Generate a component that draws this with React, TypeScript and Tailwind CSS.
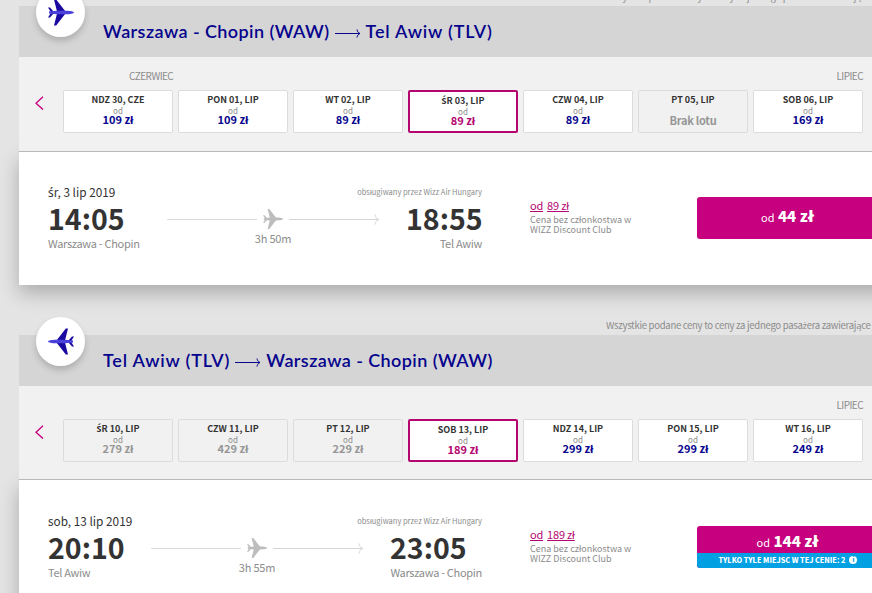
import clsx from "clsx";

type Day = {
  date: string;
  price: string;
  state?: "selected" | "past" | "none";
};

type Flight = {
  from: string;
  to: string;
  back?: boolean;
  month?: string;
  days: Day[];
  date: string;
  start: string;
  startCity: string;
  end: string;
  endCity: string;
  duration: string;
  regular: string;
  price: string;
  seats?: number;
};

const flights: Flight[] = [
  {
    from: "Warszawa - Chopin (WAW)",
    to: "Tel Awiw (TLV)",
    month: "CZERWIEC",
    days: [
      { date: "NDZ 30, CZE", price: "109 zł" },
      { date: "PON 01, LIP", price: "109 zł" },
      { date: "WT 02, LIP", price: "89 zł" },
      { date: "ŚR 03, LIP", price: "89 zł", state: "selected" },
      { date: "CZW 04, LIP", price: "89 zł" },
      { date: "PT 05, LIP", price: "Brak lotu", state: "none" },
      { date: "SOB 06, LIP", price: "169 zł" },
    ],
    date: "śr, 3 lip 2019",
    start: "14:05",
    startCity: "Warszawa - Chopin",
    end: "18:55",
    endCity: "Tel Awiw",
    duration: "3h 50m",
    regular: "89 zł",
    price: "44 zł",
  },
  {
    from: "Tel Awiw (TLV)",
    to: "Warszawa - Chopin (WAW)",
    back: true,
    days: [
      { date: "ŚR 10, LIP", price: "279 zł", state: "past" },
      { date: "CZW 11, LIP", price: "429 zł", state: "past" },
      { date: "PT 12, LIP", price: "229 zł", state: "past" },
      { date: "SOB 13, LIP", price: "189 zł", state: "selected" },
      { date: "NDZ 14, LIP", price: "299 zł" },
      { date: "PON 15, LIP", price: "299 zł" },
      { date: "WT 16, LIP", price: "249 zł" },
    ],
    date: "sob, 13 lip 2019",
    start: "20:10",
    startCity: "Tel Awiw",
    end: "23:05",
    endCity: "Warszawa - Chopin",
    duration: "3h 55m",
    regular: "189 zł",
    price: "144 zł",
    seats: 2,
  },
];

// the main font has no glyphs for these letters
const Polish = ({ text }: { text: string }) => (
  <span>
    {text.split(/([śŚżą])/).map((part, i) =>
      i % 2 ? (
        <span key={i} className="font-['Noto_Sans'] leading-none">
          {part}
        </span>
      ) : (
        part
      ),
    )}
  </span>
);

const Plane = ({ className, wings, body }: { className: string; wings: string; body: string }) => (
  <svg viewBox="0 0 26 26" className={className}>
    <path
      fill={wings}
      d="M9 12 6 0h2.200L17.500 12v2L8.200 26H6l3-12ZM2.500 12 0 8h2L5.500 12v2L2 18H0L2.500 14Z"
    />
    <path fill={body} d="M1 12 9 11.200h9.500c3.500 0 7.500.8 7.500 1.800s-4 1.800-7.500 1.800H9L1 14Z" />
  </svg>
);

const DayCard = ({ day }: { day: Day }) => (
  <div
    className={clsx(
      "flex flex-col items-center w-[110px] h-[43px] rounded-[2px] whitespace-nowrap",
      day.state === "selected" ? "border-2 border-[#b4046f] bg-white" : "border border-[#dcdcdc]",
      !day.state && "bg-white",
    )}
  >
    <p className="mt-[3px] h-3 text-[9px] leading-3 font-bold text-[#333]">
      <Polish text={day.date} />
    </p>
    <p className="mt-[2px] h-[7px] text-[8px] leading-[6px] tracking-[0.2px] text-[#8c8c8c]">
      {day.state !== "none" && "od"}
    </p>
    <p
      className={clsx(
        "text-[11px] leading-[9px] font-bold",
        !day.state && "text-[#06038d]",
        day.state === "selected" && "text-[#b4046f]",
        (day.state === "past" || day.state === "none") && "text-[#969696]",
        day.state === "none" && "mt-px tracking-[-0.25px]",
      )}
    >
      {day.price}
    </p>
  </div>
);

const Route = ({ duration }: { duration: string }) => (
  <div className="w-[213px] pt-[9px]">
    <div className="flex items-center justify-between h-5">
      <div className="w-[90px] h-px bg-[#dcdcdc]" />
      <Plane className="w-5 h-5" wings="#bdbdbd" body="#bdbdbd" />
      <svg viewBox="0 0 91 12" className="w-[91px] h-3 fill-none stroke-[#d5d5d5]">
        <path d="M0 6.5h90M86 1.500c.3 3 1.500 4 4 5-2.500 1-3.700 2-4 5" />
      </svg>
    </div>
    <p className="text-center text-[11px] leading-[19px] tracking-[-0.2px] text-[#8c8c8c]">{duration}</p>
  </div>
);

const Title = ({ text }: { text: string }) => (
  <span className={text.startsWith("Tel") ? "tracking-[0.8px]" : "tracking-[0.42px]"}>{text}</span>
);

const Section = ({ flight }: { flight: Flight }) => (
  <section className="w-[900px] ml-[19px]">
    <p className="flex items-end h-[50px] pl-[587px] pb-[3px] text-[9.5px] leading-[14px] tracking-[-0.27px] text-[#8c8c8c] whitespace-nowrap">
      <Polish text="Wszystkie podane ceny to ceny za jednego pasażera zawierające" />
    </p>
    <header className="relative z-10 flex h-[51px] bg-[#d5d5d5]">
      <div className="flex items-center justify-center w-[49px] h-[49px] ml-[17px] -mt-[18px] rounded-full bg-white shadow-[0_4px_6px_rgba(0,0,0,0.18)]">
        <Plane
          className={clsx("w-[26px] h-[27px]", flight.back && "-scale-x-100")}
          wings="#1b0aa0"
          body="#4a40dc"
        />
      </div>
      <h2 className="flex items-center h-[51px] ml-[18px] font-[Lato] text-[18px] font-semibold text-[#06038d] whitespace-nowrap">
        <Title text={flight.from} />
        <svg viewBox="0 0 26 10" className="w-[26px] h-[10px] mx-[5px] mt-[3px] fill-none stroke-[#06038d]">
          <path d="M0 5.5h25M22 1.500c.3 2 1 3 3 4-2 1-2.700 2-3 4" />
        </svg>
        <Title text={flight.to} />
      </h2>
    </header>
    <div
      className={clsx(
        "relative z-10 bg-[#f1f1f1] border-b border-[#b9b9b9]",
        flight.back ? "h-[94px]" : "h-[95px]",
      )}
    >
      <div className="flex justify-between w-[844px] h-[33px] pl-[110px] pt-3 text-[10px] leading-[14px] tracking-[-0.55px] text-[#8c8c8c]">
        <span>{flight.month}</span>
        <span>LIPIEC</span>
      </div>
      <div className="flex">
        <svg viewBox="0 0 10 14" className="w-[10px] h-[14px] ml-4 mt-[6px] mr-[18px] fill-none stroke-[#c6007e] stroke-[1.3]">
          <path d="M8 .8 1 7.200 8 13.600" />
        </svg>
        <div className="flex gap-[5px]">
          {flight.days.map((day) => (
            <DayCard key={day.date} day={day} />
          ))}
        </div>
      </div>
    </div>
    <div
      className={clsx(
        "flex bg-white shadow-[0_8px_18px_rgba(0,0,0,0.25)]",
        flight.back ? "h-[134px] pt-px" : "h-[133px]",
      )}
    >
      <div className="w-[434px] ml-[29px] pt-8">
        <div className="flex justify-between h-4 leading-4 whitespace-nowrap">
          <span className="text-[11.8px] text-[#333]">
            <Polish text={flight.date} />
          </span>
          <span className="text-[7.5px] text-[#8c8c8c]">obsługiwany przez Wizz Air Hungary</span>
        </div>
        <div className="flex justify-between whitespace-nowrap">
          <div className={flight.back ? "w-[76px]" : "w-[92px]"}>
            <p className="h-[37px] text-[28.5px] leading-[36px] font-bold text-[#333]">{flight.start}</p>
            <p className="text-[11px] leading-[13px] tracking-[-0.3px] text-[#8c8c8c]">{flight.startCity}</p>
          </div>
          <Route duration={flight.duration} />
          <div className={flight.back ? "w-[92px]" : "w-[76px]"}>
            <p className="h-[37px] text-[28.5px] leading-[36px] font-bold text-[#333]">{flight.end}</p>
            <p className="text-right text-[11px] leading-[13px] tracking-[-0.3px] text-[#8c8c8c]">
              {flight.endCity}
            </p>
          </div>
        </div>
      </div>
      <div className="w-[166px] pl-12 pt-[46px] text-[9px] leading-[10px] text-[#8c8c8c] whitespace-nowrap">
        <p className="mb-[2px] text-[11px] leading-[15px] tracking-[-0.2px] text-[#b4046f]">
          <span className="underline">od</span>
          <span className="ml-[4px] underline">{flight.regular}</span>
        </p>
        <p>Cena bez członkostwa w</p>
        <p>WIZZ Discount Club</p>
      </div>
      <div className="w-[182px] h-[42px] mt-[45px] ml-[49px] rounded-[3px] overflow-hidden bg-[#c6007e] text-center text-white whitespace-nowrap">
        <p
          className={clsx(
            "pr-px text-[15px] font-black",
            flight.seats ? "h-[27px] leading-[29px]" : "leading-[38px]",
          )}
        >
          <span className="text-[11px] font-normal">od</span> {flight.price}
        </p>
        {flight.seats && (
          <p className="flex items-center justify-center h-[15px] bg-[#00a0e3] text-[7.2px] font-black">
            TYLKO TYLE MIEJSC W TEJ CENIE: {flight.seats}
            <span className="flex items-center justify-center w-2 h-2 ml-1 -mt-[2px] rounded-full bg-white text-[6px] text-[#00a0e3]">
              i
            </span>
          </p>
        )}
      </div>
    </div>
  </section>
);

const App = () => {
  return (
    <div className="h-[593px] overflow-hidden bg-[#e4e4e4] font-['Noto_Sans_CJK_SC','Noto_Sans',sans-serif]">
      <div className="-mt-[44px]">
        {flights.map((flight) => (
          <Section key={flight.from} flight={flight} />
        ))}
      </div>
    </div>
  );
};

export default App;
